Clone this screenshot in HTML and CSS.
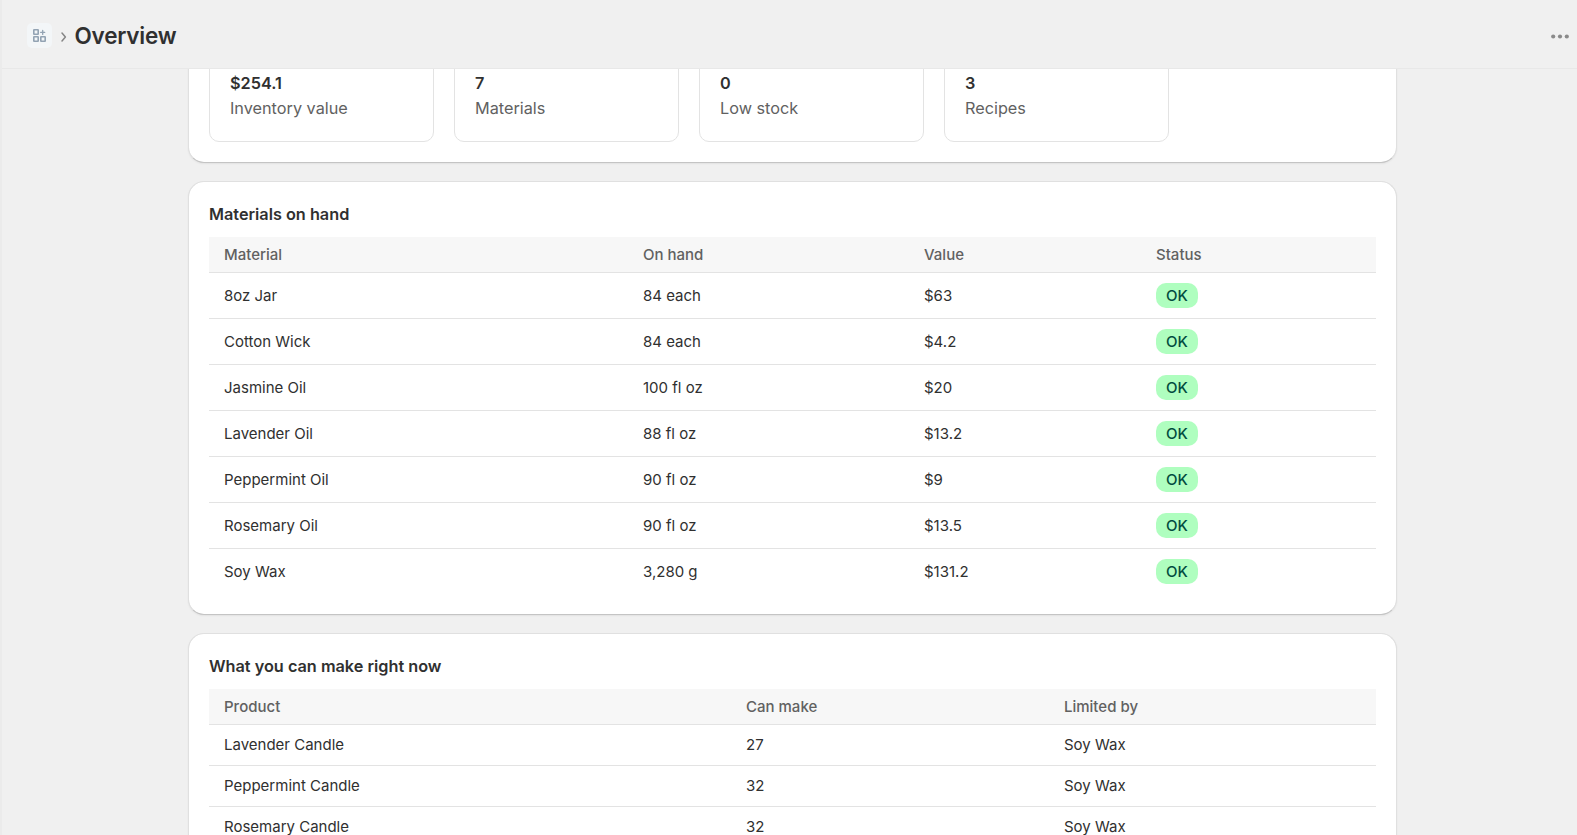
FILE: index.html
```html
<!DOCTYPE html>
<html lang="en">
<head>
<meta charset="utf-8">
<title>Overview</title>
<link rel="stylesheet" href="styles.css">
</head>
<body>
<header class="topbar">
  <span class="app-tile">
    <svg width="15" height="15" viewBox="0 0 15 15" fill="none" stroke="#93a3b3" stroke-width="1.6">
      <rect x="1.8" y="1.8" width="4.4" height="4.4" rx=".3"/>
      <rect x="1.8" y="8.8" width="4.4" height="4.4" rx=".3"/>
      <rect x="8.8" y="8.8" width="4.4" height="4.4" rx=".3"/>
      <path d="M10.7 2.4v4M8.7 4.4h4" stroke-width="1.3" stroke-linecap="round"/>
    </svg>
  </span>
  <svg class="crumb" width="8" height="12" viewBox="0 0 8 12" fill="none" stroke="#858585" stroke-width="1.5" stroke-linecap="round" stroke-linejoin="round"><path d="M2 2l3.4 4L2 10"/></svg>
  <h1 class="page-title">Overview</h1>
  <svg class="more" width="18" height="5" viewBox="0 0 18 5" fill="#8a8a8a"><circle cx="2.2" cy="2.5" r="2.1"/><circle cx="9" cy="2.5" r="2.1"/><circle cx="15.8" cy="2.5" r="2.1"/></svg>
</header>
<main class="content">
  <section class="card stats">
    <div class="stat"><strong>$254.1</strong><span>Inventory value</span></div>
    <div class="stat"><strong>7</strong><span>Materials</span></div>
    <div class="stat"><strong>0</strong><span>Low stock</span></div>
    <div class="stat"><strong>3</strong><span>Recipes</span></div>
  </section>
  <section class="card">
    <h2>Materials on hand</h2>
    <table class="materials">
      <colgroup><col class="m1"><col class="m2"><col class="m3"><col></colgroup>
      <thead><tr><th>Material</th><th>On hand</th><th>Value</th><th>Status</th></tr></thead>
      <tbody>
        <tr><td>8oz Jar</td><td>84 each</td><td>$63</td><td><span class="badge">OK</span></td></tr>
        <tr><td>Cotton Wick</td><td>84 each</td><td>$4.2</td><td><span class="badge">OK</span></td></tr>
        <tr><td>Jasmine Oil</td><td>100 fl oz</td><td>$20</td><td><span class="badge">OK</span></td></tr>
        <tr><td>Lavender Oil</td><td>88 fl oz</td><td>$13.2</td><td><span class="badge">OK</span></td></tr>
        <tr><td>Peppermint Oil</td><td>90 fl oz</td><td>$9</td><td><span class="badge">OK</span></td></tr>
        <tr><td>Rosemary Oil</td><td>90 fl oz</td><td>$13.5</td><td><span class="badge">OK</span></td></tr>
        <tr><td>Soy Wax</td><td>3,280 g</td><td>$131.2</td><td><span class="badge">OK</span></td></tr>
      </tbody>
    </table>
  </section>
  <section class="card">
    <h2>What you can make right now</h2>
    <table class="products">
      <colgroup><col class="p1"><col class="p2"><col></colgroup>
      <thead><tr><th>Product</th><th>Can make</th><th>Limited by</th></tr></thead>
      <tbody>
        <tr><td>Lavender Candle</td><td>27</td><td>Soy Wax</td></tr>
        <tr><td>Peppermint Candle</td><td>32</td><td>Soy Wax</td></tr>
        <tr><td>Rosemary Candle</td><td>32</td><td>Soy Wax</td></tr>
      </tbody>
    </table>
  </section>
</main>
</body>
</html>
```
FILE: styles.css
```css
* { box-sizing: border-box; }
body {
  margin: 0;
  height: 835px;
  overflow: hidden;
  display: flex;
  flex-direction: column;
  background: #f0f0f0;
  border-left: 2px solid #ebebeb;
  color: #303030;
  font-family: Inter, "Liberation Sans", sans-serif;
}
.topbar {
  flex: none;
  height: 69px;
  padding: 3px 8px 0 25px;
  display: flex;
  align-items: center;
  border-bottom: 1px solid #e8e8e8;
}
.app-tile {
  width: 25px;
  height: 25px;
  border-radius: 5px;
  background: #f3f6f8;
  display: grid;
  place-items: center;
}
.crumb { margin: 2px 6.5px 0 8px; }
.page-title { margin: 0; font-size: 22.5px; line-height: 30px; font-weight: 600; letter-spacing: -.2px; }
.more { margin: 1px 0 0 auto; }
.content {
  flex: 1;
  min-height: 0;
  overflow: hidden;
  padding: 0 180px 0 186px;
}
.card {
  background: #fff;
  border-radius: 16px;
  padding: 20px;
  margin-bottom: 18px;
  border: 1px solid #e0e0e0;
  border-bottom-color: #c4c4c4;
  background-clip: padding-box;
  box-shadow: 0 1px 2px rgba(0, 0, 0, .06);
}
.card h2 { margin: 0 0 10px; font-size: 16.25px; line-height: 25px; font-weight: 600; }
.stats { display: flex; gap: 20px; margin-top: -40px; }
.stat {
  width: 225px;
  padding: 20px;
  border: 1px solid #e3e3e3;
  border-radius: 10px;
  display: flex;
  flex-direction: column;
  font-size: 16.25px;
  line-height: 25px;
}
.stat strong { font-weight: 600; }
.stat span { color: #616161; }
table { width: 100%; table-layout: fixed; border-collapse: separate; border-spacing: 0; font-size: 15px; line-height: 20px; }
.m1 { width: 419px; }
.m2 { width: 281px; }
.m3 { width: 232px; }
.p1 { width: 522px; }
.p2 { width: 318px; }
th, td { text-align: left; padding: 0 15px; border-bottom: 1px solid #e3e3e3; vertical-align: middle; }
th { height: 36px; background: #f7f7f7; color: #616161; font-weight: 550; }
.materials td { height: 46px; }
.products td { height: 41px; }
.materials tbody tr:last-child td { height: 45px; border-bottom: 0; }
.badge {
  display: block;
  width: 42px;
  height: 25px;
  border-radius: 10px;
  background: #affebf;
  color: #014b40;
  font-weight: 550;
  line-height: 25px;
  text-align: center;
}
```
